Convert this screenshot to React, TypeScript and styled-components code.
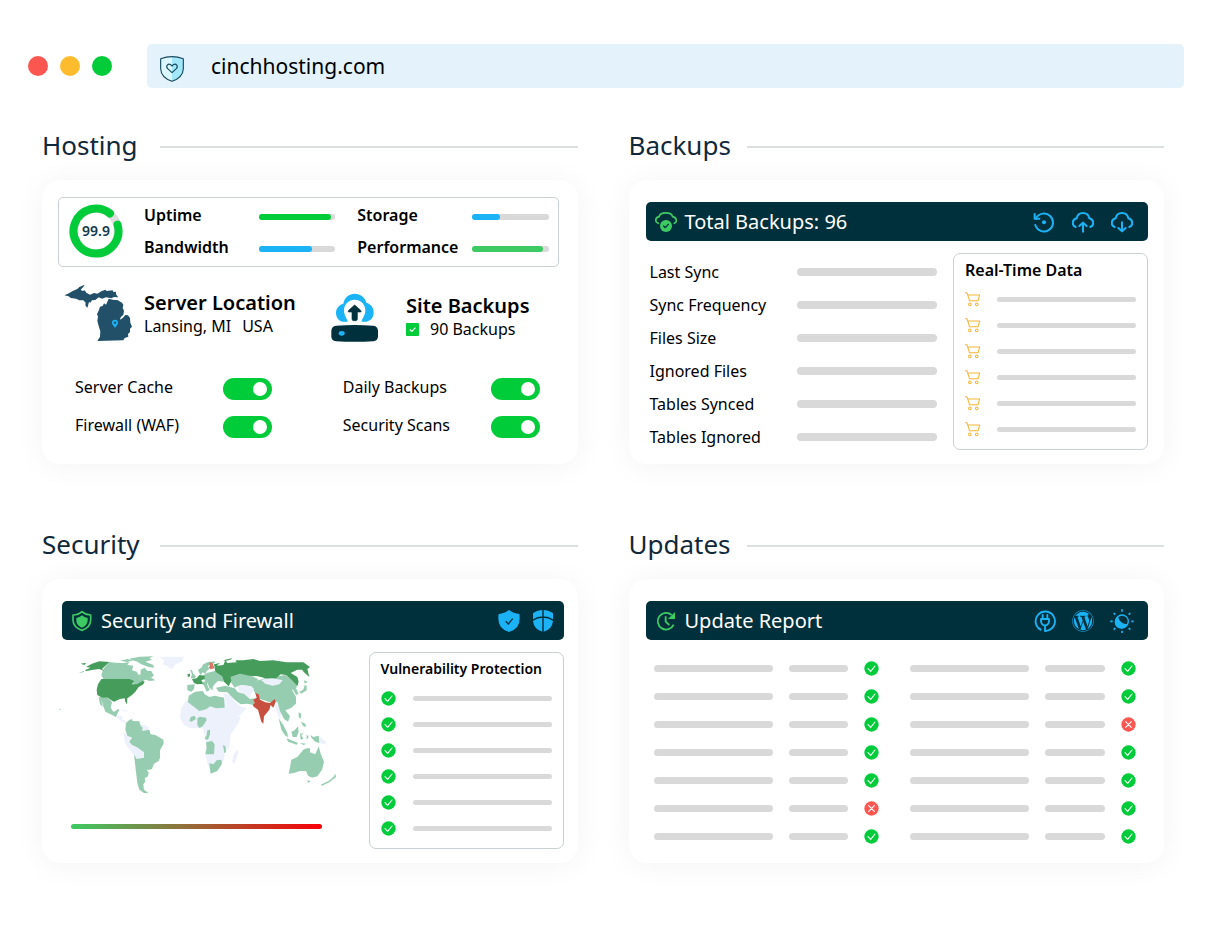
import React from "react";
import styled, { createGlobalStyle } from "styled-components";
import { FaWordpress } from "react-icons/fa";

const navy = "#00303c";
const green = "#00cc3a";
const leaf = "#3dca63";
const sky = "#1cb3f6";
const red = "#fb5650";
const grey = "#d9d9d9";
const outline = "#c9d0d3";

const GlobalStyle = createGlobalStyle`
  * { box-sizing: border-box; }
  body {
    margin: 0;
    background: #fff;
    color: #000;
    font-family: "Noto Sans", "Open Sans", sans-serif;
    font-size: 16px;
  }
  h2, h3, p, ul { margin: 0; padding: 0; }
  ul { list-style: none; }
  svg { display: block; flex: none; }
`;

const Page = styled.div`
  padding: 44px 0 60px;
`;

const Browser = styled.header`
  display: flex;
  align-items: center;
  gap: 35px;
  padding: 0 45px 0 28px;
`;

const Dots = styled.div`
  display: flex;
  gap: 12px;
`;

const Dot = styled.span<{ $color: string }>`
  width: 20px;
  height: 20px;
  border-radius: 50%;
  background: ${(p) => p.$color};
`;

const AddressBar = styled.label`
  flex: 1;
  display: flex;
  align-items: center;
  gap: 27px;
  height: 44px;
  padding: 0 13px;
  border-radius: 5px;
  background: #e4f2fc;
`;

const Address = styled.input`
  flex: 1;
  min-width: 0;
  padding: 0;
  border: 0;
  outline: 0;
  background: transparent;
  color: #000;
  font: 400 21px/28px "Noto Sans", "Open Sans", sans-serif;
`;

const Board = styled.main`
  display: grid;
  grid-template-columns: 1fr 1fr;
  gap: 65px 51px;
  padding: 42px 65px 0 42px;
`;

const Section = styled.section`
  display: flex;
  flex-direction: column;
  gap: 16px;
  min-width: 0;
`;

const Heading = styled.div`
  display: flex;
  align-items: center;
  height: 34px;
`;

const Title = styled.h2`
  min-width: 118px;
  padding-bottom: 4px;
  color: #10283a;
  font-size: 26px;
  font-weight: 400;
  line-height: 30px;
`;

const Rule = styled.span`
  flex: 1;
  height: 2px;
  background: #dcdfe0;
`;

const Card = styled.div<{ $pad: string }>`
  flex: 1;
  padding: ${(p) => p.$pad};
  border-radius: 18px;
  background: #fff;
  box-shadow: 0 2px 30px rgba(0, 0, 0, 0.05);
`;

const Banner = styled.div<{ $gap: number; $end: number }>`
  display: flex;
  align-items: center;
  gap: ${(p) => p.$gap}px;
  height: 39px;
  padding: 0 ${(p) => p.$end}px 0 9px;
  border-radius: 5px;
  background: ${navy};
  color: #fff;
`;

const BannerTitle = styled.h3`
  flex: 1;
  display: flex;
  align-items: center;
  gap: 8px;
  font-size: 20px;
  font-weight: 400;
  line-height: 27px;
`;

const IconButton = styled.button`
  display: flex;
  padding: 0;
  border: 0;
  background: none;
  color: ${sky};
  cursor: pointer;
`;

const Line = styled.span<{ $h: number }>`
  display: block;
  height: ${(p) => p.$h}px;
  border-radius: 4px;
  background: ${grey};
`;

/* Hosting */

const StatsPanel = styled.div`
  display: flex;
  align-items: center;
  gap: 21px;
  height: 70px;
  padding: 0 9px 2px 10px;
  border: 1px solid ${outline};
  border-radius: 5px;
`;

const Stats = styled.div`
  flex: 1;
  display: grid;
  grid-template-columns: 1fr 1fr;
  gap: 8px 22px;
`;

const Stat = styled.div`
  display: grid;
  grid-template-columns: 115px 1fr;
  align-items: center;
  font-weight: 600;
  line-height: 24px;
`;

const Meter = styled.div`
  height: 6px;
  margin-top: 4px;
  border-radius: 3px;
  background: ${grey};
`;

const MeterFill = styled.div<{ $color: string }>`
  height: 6px;
  border-radius: 3px;
  background: ${(p) => p.$color};
`;

const Features = styled.div`
  display: flex;
  align-items: flex-end;
  margin-top: 17px;
  padding-left: 6px;
`;

const Feature = styled.div<{ $gap: number; $basis: string }>`
  display: flex;
  align-items: center;
  gap: ${(p) => p.$gap}px;
  flex: ${(p) => p.$basis};
`;

const FeatureName = styled.h3`
  font-size: 20px;
  font-weight: 600;
  line-height: 24px;
`;

const FeatureNote = styled.p`
  display: flex;
  align-items: center;
  gap: 11px;
  line-height: 22px;
`;

const Switches = styled.div`
  display: grid;
  grid-template-columns: 1fr 1fr;
  gap: 16px 71px;
  margin: 34px 19px 0 17px;
`;

const SwitchRow = styled.label`
  display: flex;
  align-items: flex-start;
  justify-content: space-between;
  line-height: 18px;
`;

const Switch = styled.input`
  appearance: none;
  display: flex;
  align-items: center;
  width: 49px;
  height: 22px;
  margin: 0;
  padding: 0 5px;
  border-radius: 11px;
  background: ${grey};
  cursor: pointer;

  &:checked {
    justify-content: flex-end;
    background: ${green};
  }

  &::before {
    content: "";
    width: 14px;
    height: 14px;
    border-radius: 50%;
    background: #fff;
  }
`;

/* Backups and Security */

const Body = styled.div`
  display: flex;
  margin-top: 12px;
`;

const SyncList = styled.ul`
  flex: 1;
  padding: 2px 16px 0 4px;
`;

const SyncItem = styled.li`
  display: grid;
  grid-template-columns: 147px 1fr;
  align-items: center;
  height: 33px;
`;

const SidePanel = styled.div`
  width: 195px;
  height: 197px;
  padding: 6px 11px 7px;
  border: 1px solid ${outline};
  border-radius: 7px;
`;

const SideTitle = styled.h3<{ $size: number }>`
  margin-bottom: 6px;
  font-size: ${(p) => p.$size}px;
  font-weight: 600;
  line-height: 20px;
  white-space: nowrap;
`;

const SideItem = styled.li`
  display: grid;
  grid-template-columns: 15px 1fr;
  gap: 17px;
  align-items: center;
  height: 26px;
`;

const MapColumn = styled.div`
  flex: 1;
`;

const MapSvg = styled.svg`
  overflow: visible;
`;

const HeatScale = styled.div`
  height: 5px;
  margin: 28px 47px 0 9px;
  border-radius: 3px;
  background: linear-gradient(90deg, ${leaf}, #f80008);
`;

/* Updates */

const UpdateGrid = styled.div`
  display: grid;
  grid-template-columns: 1fr 1fr;
  gap: 31px;
  padding: 14px 12px 0 8px;
`;

const UpdateItem = styled.li`
  display: grid;
  grid-template-columns: 2fr 1fr 15px;
  gap: 16px;
  align-items: center;
  height: 28px;
`;

const stroke = {
  fill: "none",
  stroke: "currentColor",
  strokeLinecap: "round" as const,
  strokeLinejoin: "round" as const,
};

const Status = ({ ok = true }: { ok?: boolean }) => (
  <svg width="15" height="15" viewBox="0 0 45 45" role="img" aria-label={ok ? "OK" : "Failed"}>
    <circle cx="22.5" cy="22.5" r="21.5" fill={ok ? green : red} />
    <path
      d={ok ? "M12 23 L20 31 L33 15" : "M14 14 L31 31 M31 14 L14 31"}
      fill="none"
      stroke="#fff"
      strokeWidth="3.4"
      strokeLinecap="round"
    />
  </svg>
);

const Cart = () => (
  <svg width="15" height="15" viewBox="134 305 46 46" {...stroke} color="#f5b532" strokeWidth="3.2">
    <path d="M135 307 H140 L148 332 H174 L179 314 H143" />
    <circle cx="149" cy="343" r="4" />
    <circle cx="170" cy="343" r="4" />
  </svg>
);

const HeartShield = () => (
  <svg width="24" height="32" viewBox="480 90 72 96">
    <path d="M516 110 Q532 110 550 116 V146 Q549 172 516 185Z" fill="#a3e7fb" />
    <path d="M516 110 Q500 110 482 116 V146 Q483 172 516 185Z" fill="#dcf7fd" />
    <g fill="none" stroke="#17495d" strokeWidth="3.4" strokeLinejoin="round">
      <path d="M516 110 Q533 110 550 116 V146 Q549 172 516 184 Q483 172 482 146 V116 Q499 110 516 110Z" />
      <path d="M516 158 L503 146 C496 138 504 129 512 134 L516 138 L520 134 C528 129 536 138 529 146Z" />
    </g>
  </svg>
);

const UptimeRing = () => (
  <svg width="54" height="54" viewBox="0 0 54 54" role="img" aria-label="99.9">
    <circle cx="27" cy="27" r="22" fill="none" stroke="#dedede" strokeWidth="8" />
    <path
      d="M48.500 20.500 A22.500 22.500 0 1 1 41 9.500"
      fill="none"
      stroke={green}
      strokeWidth="8"
      strokeLinecap="round"
    />
    <text
      x="27"
      y="32"
      textAnchor="middle"
      fill="#123a4c"
      fontFamily="Noto Sans, sans-serif"
      fontSize="14"
      fontWeight="600"
    >
      99.9
    </text>
  </svg>
);

const Michigan = () => (
  <svg width="70" height="60" viewBox="72 312 210 180">
    <g fill="#225069">
      <path d="M73 346 L84 341 98 333 112 327 118 321 134 314 130 321 122 329 128 333 134 331 139 338 150 344 162 339 172 341 184 334 196 329 200 333 218 331 220 336 228 335 228 343 235 352 222 351 214 355 198 352 186 356 176 352 166 360 156 361 151 368 147 366 142 384 136 376 137 368 130 361 118 361 108 356 92 354 86 349Z" />
      <path d="M206 356 L222 360 232 360 246 368 250 374 248 384 252 392 250 404 242 412 240 419 248 414 256 405 264 406 270 414 271 428 276 440 270 446 270 456 264 462 265 470 254 474 250 481 172 483 180 470 181 454 176 438 172 422 174 410 171 402 176 392 180 380 188 378 192 370 198 374Z" />
    </g>
    <path d="M225 444 C220 436 216 433 216 428 A9 9 0 0 1 234 428 C234 433 230 436 225 444Z" fill={sky} />
    <circle cx="225" cy="428" r="3.500" fill="#225069" />
  </svg>
);

const CloudServer = () => (
  <svg width="50" height="54" viewBox="60 331 150 162">
    <path
      d="M98 426 C84 423 78 411 78 400 C78 386 87 376 100 372 C103 352 118 342 134 342 C151 342 165 353 169 369 C183 373 191 384 191 398 C191 412 184 423 170 426Z"
      fill={sky}
    />
    <path
      d="M113 427 C112 416 102 410 102 392 C102 373 117 360 134 360 C152 360 166 374 166 392 C166 410 155 416 155 427Z"
      fill="#fff"
    />
    <path
      d="M134 376 L152 392 Q156 398 150 397 H142 V418 Q142 423 137 423 H131 Q126 423 126 418 V397 H118 Q112 398 116 392Z"
      fill={navy}
      stroke={navy}
      strokeWidth="2"
      strokeLinejoin="round"
    />
    <path
      d="M78 438 Q134 434 190 438 Q204 440 204 454 V470 Q204 483 190 485 Q134 488 78 485 Q64 483 64 470 V454 Q64 440 78 438Z"
      fill={navy}
    />
    <ellipse cx="95" cy="461" rx="9" ry="7" fill={sky} />
  </svg>
);

const CheckBadge = () => (
  <svg width="13" height="13" viewBox="0 0 40 40">
    <rect width="40" height="40" rx="3" fill={green} />
    <path d="M12 20 L18 26 L29 14" fill="none" stroke="#fff" strokeWidth="3.500" />
  </svg>
);

const CloudCheck = () => (
  <svg width="22" height="22" viewBox="105 275 66 66" {...stroke} color={leaf} strokeWidth="5">
    <path d="M115 312 C104 308 105 295 117 292 C121 277 154 277 158 292 C171 295 172 308 163 312" />
    <circle cx="138" cy="320" r="18" fill="currentColor" stroke="none" />
    <path d="M131 320 L136 325 L145 315" stroke={navy} strokeWidth="4" />
  </svg>
);

const Restore = () => (
  <svg width="22" height="22" viewBox="341 62 66 66" {...stroke} strokeWidth="6">
    <path d="M350 84 A27 27 0 1 1 348 104" />
    <path d="M346 71 V85 H360" />
    <circle cx="374" cy="96" r="6" fill="currentColor" stroke="none" />
  </svg>
);

const CloudArrow = ({ down = false }: { down?: boolean }) => (
  <svg width="22" height="22" viewBox="459 62 66 66" {...stroke} strokeWidth="6">
    <path d="M470 110 C458 106 458 88 473 84 C477 63 507 63 511 84 C526 88 526 106 514 110" />
    <path d={down ? "M492 96 V122 M481 113 L492 123 L503 113" : "M492 124 V98 M481 107 L492 97 L503 107"} />
  </svg>
);

const ShieldCore = () => (
  <svg width="22" height="22" viewBox="92 63 66 66" {...stroke} color={leaf} strokeWidth="5">
    <path d="M125 68 Q136 78 151 78 V94 Q150 116 125 124 Q99 116 98 94 V78 Q114 78 125 68Z" />
    <path d="M125 79 Q132 86 142 87 V96 Q140 110 125 116 Q109 110 108 96 V87 Q118 86 125 79Z" fill="currentColor" stroke="none" />
  </svg>
);

const ShieldCheck = () => (
  <svg width="22" height="22" viewBox="474 61 66 66">
    <path d="M507 61 Q520 72 538 73 Q545 116 507 127 Q469 116 476 73 Q494 72 507 61Z" fill={sky} />
    <path d="M497 95 L505 103 L518 87" fill="none" stroke={navy} strokeWidth="4" />
  </svg>
);

const ShieldQuarters = () => (
  <svg width="22" height="22" viewBox="576 61 66 66">
    <path d="M609 61 Q628 62 639 71 V94 Q636 120 609 127 Q582 120 579 94 V71 Q590 62 609 61Z" fill={sky} />
    <path d="M609 60 V128 M577 92 Q593 82 609 82 Q625 82 641 92" fill="none" stroke={navy} strokeWidth="4.500" />
  </svg>
);

const ClockRefresh = () => (
  <svg width="22" height="22" viewBox="102 61 66 66" {...stroke} color={leaf} strokeWidth="5.500">
    <path d="M152 76 A25 25 0 1 0 158 105" strokeLinecap="butt" />
    <path d="M162 67 V88 H141Z" fill="currentColor" stroke="none" />
    <path d="M134 80 V96 L145 106" strokeLinecap="butt" />
  </svg>
);

const Plug = () => (
  <svg width="22" height="22" viewBox="404 60 66 66" {...stroke} strokeWidth="5.500">
    <path d="M424 119 A29 29 0 1 1 447 121 L437 123 V108" />
    <path d="M425 87 H449 V93 A12 13 0 0 1 425 93Z M430 86 V75 M444 86 V75" />
  </svg>
);

const SunMoon = () => (
  <svg width="24" height="24" viewBox="630 54 72 72" {...stroke} strokeWidth="5">
    <circle cx="666" cy="91" r="19" strokeWidth="4" />
    <path d="M654 76 Q659 100 683 100 A20 20 0 1 1 654 76Z" fill="currentColor" stroke="none" />
    <path
      d="M666 55 V62 M666 119 V126 M631 91 H638 M694 91 H701 M641 66 L646 71 M691 66 L686 71 M641 116 L646 111 M691 116 L686 111"
      strokeLinecap="butt"
    />
  </svg>
);

const WorldMap = () => (
  <MapSvg width="276" height="144" viewBox="66 183 828 432" role="img" aria-label="Threats by country">
    <g fill="#edf1fb">
      <path d="M358 199 L376 197 434 197 426 204 430 209 404 222 398 234 388 232 382 226 368 220 372 208Z" />
      <path d="M228 374 L246 374 248 386 258 392 256 398 240 388Z M238 356 L256 356 266 362 250 360Z M268 364 L286 366 282 370Z" />
      <path d="M300 402 L314 402 328 410 324 420 306 420Z" />
      <path d="M250 424 L268 434 280 462 304 470 314 486 312 502 290 506 282 492 262 468 254 450Z" />
      <path d="M438 330 L460 304 490 300 492 312 520 320 552 318 558 340 566 356 578 378 602 376 596 396 572 430 568 468 554 486 552 506 540 528 512 546 502 516 496 490 498 450 488 412 450 412 432 402 420 380 424 350Z" />
      <path d="M592 474 L595 486 584 518 576 512 580 492Z" />
      <path d="M550 306 L572 312 586 334 602 346 620 352 600 372 578 386 566 362Z" />
      <path d="M704 338 L716 344 724 362 720 386 708 358Z" />
      <path d="M838 436 L860 454 854 460 838 456Z" />
    </g>
    <g fill="#96cdb0">
      <path d="M208 213 L226 215 250 216 268 213 262 222 280 224 276 238 290 242 296 252 302 250 302 236 314 230 322 240 334 240 342 254 332 260 320 262 334 260 346 268 330 270 316 266 300 276 284 284 272 264 190 264 184 252 190 234Z" />
      <path d="M240 209 L262 204 280 208 262 213Z M268 203 L300 197 340 196 328 202 336 206 316 212 340 222 342 230 326 228 304 220 292 212 278 208Z" />
      <path d="M176 318 L206 322 216 334 212 350 220 362 228 360 232 354 238 356 232 368 228 378 212 370 196 362 190 346 184 326 188 348 180 340Z" />
      <path d="M258 396 L268 387 276 384 278 390 298 391 302 404 308 410 306 420 328 416 332 430 346 432 370 446 371 458 360 478 360 500 356 510 342 518 336 534 328 536 320 536 326 544 324 556 314 562 316 572 310 580 312 596 326 607 312 606 298 596 292 576 288 544 282 490 290 504 312 500 312 484 290 468 276 462 268 452 276 440 262 434 256 416Z" />
      <path d="M444 334 L446 314 466 302 488 300 494 310 508 318 524 314 552 320 554 350 528 352 510 346 500 354 478 360Z" />
      <path d="M472 382 L480 377 498 380 500 388 488 406 478 411 472 402Z M448 390 L452 378 464 374 468 384 454 392Z M502 418 L510 416 510 430 504 446 494 444 500 432Z M498 454 L516 450 524 460 522 490 496 490 500 472Z M549 462 L556 466 558 484 553 486Z M508 516 L520 520 530 508 544 506 546 518 532 540 512 548Z" />
      <path d="M442 282 L464 280 462 294 454 302 442 298Z M450 236 L456 238 460 248 468 256 464 262 452 262 456 250Z" />
      <path d="M478 246 L474 236 484 230 490 220 502 214 522 211 526 216 508 220 504 228 508 234 500 240 496 248 488 244 482 252Z" />
      <path d="M486 256 L500 246 524 240 546 256 552 272 534 270 524 280 518 288 518 298 508 290 504 280 500 274 504 288 510 296 500 302 492 284 484 276 496 270Z" />
      <path d="M528 290 L556 284 584 292 594 304 612 308 630 324 644 322 642 342 620 338 602 340 584 326 562 304 536 302Z" />
      <path d="M572 258 L600 248 628 252 654 264 650 282 660 286 640 296 634 286 606 282 592 286 584 290 574 276Z" />
      <path d="M640 296 L654 268 680 260 722 254 736 252 774 280 768 292 756 296 768 318 768 338 752 352 736 358 750 376 744 392 732 384 720 360 712 332 690 334 660 324 646 308Z" />
      <path d="M756 290 L768 292 776 308 768 312Z M778 302 L790 296 794 282 800 284 800 298 784 308Z M792 268 L804 272 794 278Z" />
      <path d="M716 382 L730 402 742 426 744 438 736 434 724 416Z M740 442 L774 456 770 461 744 452Z M754 422 L764 418 774 406 776 422 770 438 758 438Z M776 364 L784 368 782 384 776 378Z M782 392 L796 398 798 408 790 406Z M780 428 L792 426 784 432 790 444 782 446Z M812 432 L820 438 836 434 838 456 826 452 814 440Z M780 456 L800 458 790 462Z M800 430 L806 438 800 446Z" />
      <path d="M754 506 L772 498 790 476 800 472 810 472 810 484 826 490 836 466 842 488 852 512 846 536 832 556 816 560 804 554 798 540 780 540 762 546 746 548 750 530Z M802 568 L812 570 804 576Z M842 581 L866 570 880 558 886 548 888 558 868 574 846 584Z" />
    </g>
    <g fill="#edf1fb">
      <path d="M662 266 L696 261 728 268 718 280 698 284 676 278Z" />
      <path d="M592 286 L606 282 634 286 642 294 636 306 628 320 612 306 596 302Z" />
    </g>
    <g fill="#459c5b">
      <path d="M134 238 L152 230 138 228 156 218 178 211 208 213 186 234 192 240 178 234 160 236 140 240Z M122 218 L138 215 134 222Z M116 246 L132 240 130 243Z" />
      <path d="M184 264 L270 264 282 270 276 280 290 280 308 270 314 272 310 280 296 288 286 302 276 312 262 322 261 340 256 332 254 322 240 324 222 332 214 328 204 320 186 320 172 312 170 296 174 280Z" />
      <path d="M456 264 L470 262 478 252 494 254 494 264 484 268 490 278 472 280 462 276Z M442 250 L450 248 450 256 444 258Z" />
      <path d="M522 220 L540 216 530 224 550 222 556 208 562 216 590 214 586 208 610 208 640 204 660 210 700 208 740 214 790 214 810 228 802 234 808 258 792 244 786 236 772 236 752 246 772 258 776 272 772 284 756 268 738 252 722 250 708 262 676 262 654 256 628 254 600 248 572 258 574 270 566 286 552 272 546 256 526 242Z" />
      <path d="M550 208 L574 202 576 204 558 210Z M58 352 L62 356 60 358Z" />
    </g>
    <path d="M506 218 L512 214 518 216 523 232 512 235 506 230 510 224Z" fill="#dc7465" />
    <path d="M646 306 L656 310 660 326 676 334 690 336 704 324 707 332 700 350 692 342 688 356 672 376 670 398 664 392 654 356 642 348 638 342 644 336 640 326 650 320Z" fill="#c8503f" />
  </MapSvg>
);

const SectionBox = ({ title, children }: { title: string; children: React.ReactNode }) => (
  <Section>
    <Heading>
      <Title>{title}</Title>
      <Rule />
    </Heading>
    {children}
  </Section>
);

const stats = [
  { name: "Uptime", value: 94, color: green },
  { name: "Storage", value: 37, color: sky },
  { name: "Bandwidth", value: 70, color: sky },
  { name: "Performance", value: 93, color: leaf },
];

const switches = ["Server Cache", "Daily Backups", "Firewall (WAF)", "Security Scans"];
const syncFields = ["Last Sync", "Sync Frequency", "Files Size", "Ignored Files", "Tables Synced", "Tables Ignored"];
const updates = [
  [true, true, true, true, true, false, true],
  [true, true, false, true, true, true, true],
];
const six = [0, 1, 2, 3, 4, 5];

export default function App() {
  return (
    <Page>
      <GlobalStyle />
      <Browser>
        <Dots>
          <Dot $color={red} />
          <Dot $color="#fdbc2e" />
          <Dot $color={green} />
        </Dots>
        <AddressBar>
          <HeartShield />
          <Address type="text" aria-label="Address" defaultValue="cinchhosting.com" />
        </AddressBar>
      </Browser>

      <Board>
        <SectionBox title="Hosting">
          <Card $pad="17px 19px 26px 16px">
            <StatsPanel>
              <UptimeRing />
              <Stats>
                {stats.map((s) => (
                  <Stat key={s.name}>
                    <span>{s.name}</span>
                    <Meter role="meter" aria-label={s.name} aria-valuenow={s.value}>
                      <MeterFill $color={s.color} style={{ width: `${s.value}%` }} />
                    </Meter>
                  </Stat>
                ))}
              </Stats>
            </StatsPanel>
            <Features>
              <Feature $gap={10} $basis="0 0 266px">
                <Michigan />
                <div>
                  <FeatureName>Server Location</FeatureName>
                  <FeatureNote>
                    <span>Lansing, MI</span> <span>USA</span>
                  </FeatureNote>
                </div>
              </Feature>
              <Feature $gap={26} $basis="1">
                <CloudServer />
                <div>
                  <FeatureName>Site Backups</FeatureName>
                  <FeatureNote>
                    <CheckBadge />
                    <span>90 Backups</span>
                  </FeatureNote>
                </div>
              </Feature>
            </Features>
            <Switches>
              {switches.map((name) => (
                <SwitchRow key={name}>
                  {name}
                  <Switch type="checkbox" role="switch" defaultChecked />
                </SwitchRow>
              ))}
            </Switches>
          </Card>
        </SectionBox>

        <SectionBox title="Backups">
          <Card $pad="22px 16px 11px 17px">
            <Banner $gap={17} $end={15}>
              <BannerTitle>
                <CloudCheck />
                Total Backups: 96
              </BannerTitle>
              <IconButton aria-label="Restore">
                <Restore />
              </IconButton>
              <IconButton aria-label="Upload">
                <CloudArrow />
              </IconButton>
              <IconButton aria-label="Download">
                <CloudArrow down />
              </IconButton>
            </Banner>
            <Body>
              <SyncList>
                {syncFields.map((name) => (
                  <SyncItem key={name}>
                    {name}
                    <Line $h={8} />
                  </SyncItem>
                ))}
              </SyncList>
              <SidePanel>
                <SideTitle $size={16}>Real-Time Data</SideTitle>
                <ul>
                  {six.map((i) => (
                    <SideItem key={i}>
                      <Cart />
                      <Line $h={5} />
                    </SideItem>
                  ))}
                </ul>
              </SidePanel>
            </Body>
          </Card>
        </SectionBox>

        <SectionBox title="Security">
          <Card $pad="22px 14px 14px 20px">
            <Banner $gap={12} $end={10}>
              <BannerTitle>
                <ShieldCore />
                Security and Firewall
              </BannerTitle>
              <IconButton aria-label="Protection">
                <ShieldCheck />
              </IconButton>
              <IconButton aria-label="Firewall">
                <ShieldQuarters />
              </IconButton>
            </Banner>
            <Body>
              <MapColumn>
                <WorldMap />
                <HeatScale />
              </MapColumn>
              <SidePanel>
                <SideTitle $size={14}>Vulnerability Protection</SideTitle>
                <ul>
                  {six.map((i) => (
                    <SideItem key={i}>
                      <Status />
                      <Line $h={5} />
                    </SideItem>
                  ))}
                </ul>
              </SidePanel>
            </Body>
          </Card>
        </SectionBox>

        <SectionBox title="Updates">
          <Card $pad="22px 16px 13px 17px">
            <Banner $gap={16} $end={14}>
              <BannerTitle>
                <ClockRefresh />
                Update Report
              </BannerTitle>
              <IconButton aria-label="Plugins">
                <Plug />
              </IconButton>
              <IconButton aria-label="WordPress">
                <FaWordpress size={22} />
              </IconButton>
              <IconButton aria-label="Themes">
                <SunMoon />
              </IconButton>
            </Banner>
            <UpdateGrid>
              {updates.map((column, c) => (
                <ul key={c}>
                  {column.map((ok, i) => (
                    <UpdateItem key={i}>
                      <Line $h={7} />
                      <Line $h={7} />
                      <Status ok={ok} />
                    </UpdateItem>
                  ))}
                </ul>
              ))}
            </UpdateGrid>
          </Card>
        </SectionBox>
      </Board>
    </Page>
  );
}
